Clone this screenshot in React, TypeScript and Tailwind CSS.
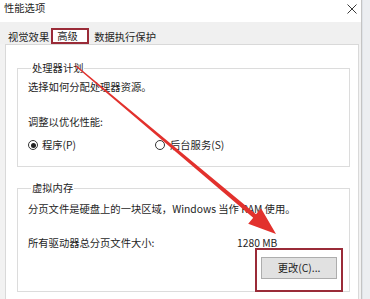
import React from "react";

export default function App() {
  return (
    <div className="relative w-[370px] h-[299px] overflow-hidden flex bg-[#f0f0f0] text-[#1e1e1e] font-['Noto_Sans_CJK_SC',sans-serif] text-[10.3px]">
      <div className="w-[362px] h-full flex flex-col border-r border-[#c4c4c4] bg-[#f2f2f2]">
        {/* title bar */}
        <div className="h-[22px] shrink-0 bg-white flex items-start justify-between pl-[4px] pr-[4px]">
          <span className="pt-[2px] leading-[12px]">性能选项</span>
          <svg width="10" height="10" viewBox="0 0 10 10" className="mt-[4px]">
            <path d="M0.5 0.5 L9.5 9.5 M9.5 0.5 L0.5 9.5" stroke="#3a3a3a" strokeWidth="1" />
          </svg>
        </div>
        {/* tabs */}
        <div className="h-[22px] shrink-0 flex items-end pl-[2px] bg-[#f0f0f0]">
          <div className="h-[14px] leading-[14px] pl-[6px] pr-[2px]">视觉效果</div>
          <div className="relative w-[38px] h-[16px] pl-[6px] pt-[2px] leading-[12px] bg-white">
            高级
            <div className="absolute inset-0 border-2 border-[#9a2b38]" />
          </div>
          <div className="h-[14px] leading-[14px] pl-[5px]">数据执行保护</div>
        </div>
        {/* panel */}
        <div className="flex-1 ml-[5px] mr-[2px] bg-white border border-b-0 border-[#d9d9d9] flex flex-col pl-[11px] pr-[8px]">
          <fieldset className="mt-[17px] border border-[#dcdcdc] px-[10px] pb-[15px]">
            <legend className="ml-[3px] px-[1px] leading-[12px]">处理器计划</legend>
            <p className="mt-[7px] leading-[12px]">选择如何分配处理器资源。</p>
            <p className="mt-[23px] leading-[12px]">调整以优化性能:</p>
            <div className="mt-[11px] h-[12px] flex items-center leading-[12px]">
              <div className="w-[127px] flex items-center gap-[4px]">
                <span className="w-[10px] h-[10px] rounded-full border border-[#333] flex items-center justify-center">
                  <span className="w-[5px] h-[5px] rounded-full bg-[#222]" />
                </span>
                <span>程序(P)</span>
              </div>
              <div className="flex items-center gap-[5px]">
                <span className="w-[10px] h-[10px] rounded-full border border-[#333]" />
                <span>后台服务(S)</span>
              </div>
            </div>
          </fieldset>
          <fieldset className="mt-[15px] border border-[#dcdcdc] px-[10px] pb-[12px]">
            <legend className="ml-[3px] px-[1px] leading-[12px]">虚拟内存</legend>
            <p className="mt-[9px] leading-[12px] whitespace-nowrap">分页文件是硬盘上的一块区域，Windows 当作 RAM 使用。</p>
            <div className="mt-[22px] flex leading-[12px]">
              <span className="w-[209px]">所有驱动器总分页文件大小:</span>
              <span>1280 MB</span>
            </div>
            <div className="mt-[8px] flex">
              <button className="ml-[233px] w-[76px] h-[22px] bg-[#e1e1e1] border border-[#adadad] flex items-center justify-center leading-[12px]">
                更改(C)...
              </button>
            </div>
          </fieldset>
        </div>
      </div>
      <div className="flex-1 h-full bg-[#eceef1] border-l border-[#dfe3e8]" />

      {/* annotations */}
      <div className="absolute left-[255px] top-[248px] w-[88px] h-[44px] border-2 border-[#9a2b38]" />
      <svg className="absolute left-0 top-0" width="370" height="299" viewBox="0 0 370 299">
        <polygon
          points="75.6,66.46 253.2,217.7 248.2,223.7 276,234 261.0,208.3 256.0,214.3 76.4,65.54"
          fill="#e2312d"
        />
      </svg>
    </div>
  );
}
